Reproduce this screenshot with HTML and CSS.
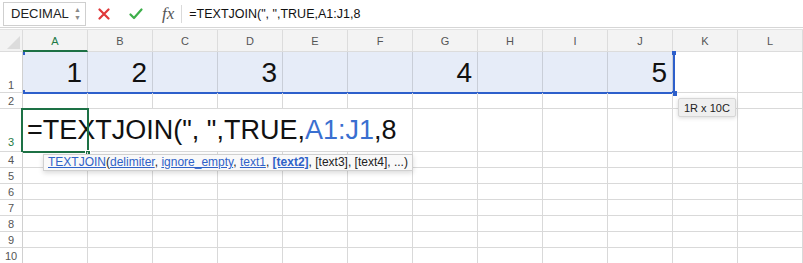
FILE: index.html
```html
<!DOCTYPE html>
<html>
<head>
  <link rel="stylesheet" href="styles.css">
</head>
<body>
  <div class="app">
    <div class="formula-bar">
      <div class="name-box">
        <span>DECIMAL</span>
        <span class="stepper"><span>&#9650;</span><span>&#9660;</span></span>
      </div>
      <div class="bar-buttons">
        <svg class="btn-cancel" width="12" height="12" viewBox="0 0 12 12"><path d="M1.5 1.5 L10.5 10.5 M10.5 1.5 L1.5 10.5" stroke="#e0383a" stroke-width="2.2" stroke-linecap="round"/></svg>
        <svg class="btn-ok" width="14" height="12" viewBox="0 0 14 12"><path d="M1.5 6.5 L5 10 L12.5 1.5" fill="none" stroke="#3daf4a" stroke-width="2.2" stroke-linecap="round" stroke-linejoin="round"/></svg>
        <span class="fx">fx</span>
      </div>
      <div class="formula-text">=TEXTJOIN(", ",TRUE,A1:J1,8</div>
    </div>

    <div class="sheet">
      <div class="row head-row">
        <div class="cell corner"></div>
        <div class="cell col-head active">A</div>
        <div class="cell col-head">B</div>
        <div class="cell col-head">C</div>
        <div class="cell col-head">D</div>
        <div class="cell col-head">E</div>
        <div class="cell col-head">F</div>
        <div class="cell col-head">G</div>
        <div class="cell col-head">H</div>
        <div class="cell col-head">I</div>
        <div class="cell col-head">J</div>
        <div class="cell col-head">K</div>
        <div class="cell col-head">L</div>
      </div>

      <div class="row row-1">
        <div class="cell row-head">1</div>
        <div class="cell num sel">1</div>
        <div class="cell num sel">2</div>
        <div class="cell num sel"></div>
        <div class="cell num sel">3</div>
        <div class="cell num sel"></div>
        <div class="cell num sel"></div>
        <div class="cell num sel">4</div>
        <div class="cell num sel"></div>
        <div class="cell num sel"></div>
        <div class="cell num sel">5</div>
        <div class="cell"></div>
        <div class="cell"></div>
        <div class="selection">
          <i class="knob tl"></i><i class="knob bl"></i><i class="knob tr"></i><i class="knob br"></i>
        </div>
        <div class="size-tip">1R x 10C</div>
      </div>

      <div class="row row-small">
        <div class="cell row-head">2</div>
        <div class="cell"></div><div class="cell"></div><div class="cell"></div><div class="cell"></div>
        <div class="cell"></div><div class="cell"></div><div class="cell"></div><div class="cell"></div>
        <div class="cell"></div><div class="cell"></div><div class="cell"></div><div class="cell"></div>
      </div>

      <div class="row row-3">
        <div class="cell row-head active">3</div>
        <div class="cell editing">=TEXTJOIN(", ",TRUE,<span class="ref">A1:J1</span>,8</div>
        <div class="cell"></div><div class="cell"></div><div class="cell"></div>
        <div class="cell"></div><div class="cell"></div><div class="cell"></div>
        <div class="active-cell"><i class="handle"></i></div>
        <div class="fn-tip">
          <a>TEXTJOIN</a>(<a>delimiter</a>, <a>ignore_empty</a>, <a>text1</a>, <a class="current">[text2]</a>, [text3], [text4], ...)
        </div>
      </div>

      <div class="row row-small">
        <div class="cell row-head">4</div>
        <div class="cell"></div><div class="cell"></div><div class="cell"></div><div class="cell"></div>
        <div class="cell"></div><div class="cell"></div><div class="cell"></div><div class="cell"></div>
        <div class="cell"></div><div class="cell"></div><div class="cell"></div><div class="cell"></div>
      </div>
      <div class="row row-small">
        <div class="cell row-head">5</div>
        <div class="cell"></div><div class="cell"></div><div class="cell"></div><div class="cell"></div>
        <div class="cell"></div><div class="cell"></div><div class="cell"></div><div class="cell"></div>
        <div class="cell"></div><div class="cell"></div><div class="cell"></div><div class="cell"></div>
      </div>
      <div class="row row-small">
        <div class="cell row-head">6</div>
        <div class="cell"></div><div class="cell"></div><div class="cell"></div><div class="cell"></div>
        <div class="cell"></div><div class="cell"></div><div class="cell"></div><div class="cell"></div>
        <div class="cell"></div><div class="cell"></div><div class="cell"></div><div class="cell"></div>
      </div>
      <div class="row row-small">
        <div class="cell row-head">7</div>
        <div class="cell"></div><div class="cell"></div><div class="cell"></div><div class="cell"></div>
        <div class="cell"></div><div class="cell"></div><div class="cell"></div><div class="cell"></div>
        <div class="cell"></div><div class="cell"></div><div class="cell"></div><div class="cell"></div>
      </div>
      <div class="row row-small">
        <div class="cell row-head">8</div>
        <div class="cell"></div><div class="cell"></div><div class="cell"></div><div class="cell"></div>
        <div class="cell"></div><div class="cell"></div><div class="cell"></div><div class="cell"></div>
        <div class="cell"></div><div class="cell"></div><div class="cell"></div><div class="cell"></div>
      </div>
      <div class="row row-small">
        <div class="cell row-head">9</div>
        <div class="cell"></div><div class="cell"></div><div class="cell"></div><div class="cell"></div>
        <div class="cell"></div><div class="cell"></div><div class="cell"></div><div class="cell"></div>
        <div class="cell"></div><div class="cell"></div><div class="cell"></div><div class="cell"></div>
      </div>
      <div class="row row-small">
        <div class="cell row-head">10</div>
        <div class="cell"></div><div class="cell"></div><div class="cell"></div><div class="cell"></div>
        <div class="cell"></div><div class="cell"></div><div class="cell"></div><div class="cell"></div>
        <div class="cell"></div><div class="cell"></div><div class="cell"></div><div class="cell"></div>
      </div>
    </div>
  </div>
</body>
</html>
```

FILE: styles.css
```css
* {
  box-sizing: border-box;
  margin: 0;
  padding: 0;
}

body {
  font-family: "Liberation Sans", Arial, sans-serif;
  background: #fff;
  color: #111;
  overflow: hidden;
}

.app {
  width: 803px;
  height: 263px;
  overflow: hidden;
}

/* formula bar */
.formula-bar {
  height: 28px;
  display: flex;
  align-items: center;
  background: #fff;
  border-bottom: 1px solid #d6d6d6;
}

.name-box {
  width: 83px;
  height: 24px;
  margin-left: 3px;
  border: 1px solid #cfcfcf;
  display: flex;
  align-items: center;
  justify-content: space-between;
  padding: 0 4px 0 7px;
  font-size: 13px;
  color: #222;
}

.stepper {
  display: flex;
  flex-direction: column;
  font-size: 7px;
  line-height: 8px;
  color: #8a8a8a;
}

.bar-buttons {
  display: flex;
  align-items: center;
  padding-left: 12px;
  border-right: 1px solid #dadada;
  height: 18px;
}

.btn-cancel {
  margin-right: 19px;
}

.btn-ok {
  margin-right: 19px;
}

.fx {
  font-family: "Liberation Serif", "DejaVu Serif", serif;
  font-style: italic;
  font-size: 17px;
  color: #555;
  margin-right: 7px;
}

.formula-text {
  padding-left: 7px;
  font-size: 12.5px;
  color: #111;
}

/* grid */
.sheet {
  margin-top: 1px;
  border-top: 1px solid #e2e2e2;
}

.row {
  display: grid;
  grid-template-columns: 23px repeat(12, 65px);
  position: relative;
}

.cell {
  border-right: 1px solid #d9d9d9;
  border-bottom: 1px solid #d9d9d9;
  white-space: nowrap;
}

.head-row {
  height: 22px;
  background: #f3f3f3;
}

.col-head {
  display: flex;
  align-items: center;
  justify-content: center;
  font-size: 11px;
  color: #555;
  border-color: #dcdcdc;
}

.col-head.active {
  color: #1d7a45;
  border-bottom: 2px solid #1d7145;
  padding-top: 1px;
}

.corner {
  position: relative;
  border-color: #dcdcdc;
}

.corner::after {
  content: "";
  position: absolute;
  right: 2px;
  bottom: 2px;
  border-left: 13px solid transparent;
  border-bottom: 13px solid #dcdcdc;
}

.row-head {
  display: flex;
  align-items: flex-end;
  justify-content: center;
  font-size: 11px;
  color: #555;
  background: #fff;
  padding-bottom: 1px;
  border-right-color: #d0d0d0;
}

.row-head.active {
  color: #1d7a45;
  padding-bottom: 3px;
}

.row-1 {
  height: 41px;
}

.row-small {
  height: 16px;
}

.row-3 {
  height: 43px;
}

.num {
  display: flex;
  align-items: flex-end;
  justify-content: flex-end;
  font-size: 28px;
  line-height: 28px;
  padding: 0 5px 5px 0;
}

.sel {
  background: #e6ecf8;
  border-right-color: #c9ced8;
}

.editing {
  grid-column: span 6;
  font-size: 27px;
  line-height: 28px;
  padding: 0 0 7px 4px;
  display: flex;
  align-items: flex-end;
}

.ref {
  color: #3a6fd0;
}

/* row selection outline */
.selection {
  position: absolute;
  left: 23px;
  top: 0;
  width: 652px;
  height: 42px;
  border-right: 2px solid #2d5fcb;
  border-bottom: 2px solid #2d5fcb;
  pointer-events: none;
}

.knob {
  position: absolute;
  background: #2d5fcb;
}

.knob.tl { left: 0; top: 0; width: 2px; height: 3px; }
.knob.bl { left: 0; bottom: -2px; width: 2px; height: 4px; }
.knob.tr { right: -3px; top: -1px; width: 4px; height: 4px; }
.knob.br { right: -4px; bottom: -4px; width: 5px; height: 5px; }

.size-tip {
  position: absolute;
  left: 678px;
  top: 46px;
  height: 19px;
  padding: 0 5px;
  font-size: 11px;
  line-height: 18px;
  color: #222;
  background: #efefef;
  border: 1px solid #d6d6d6;
  border-radius: 2px;
  box-shadow: 0 1px 4px rgba(0, 0, 0, 0.15);
  z-index: 3;
}

/* active cell */
.active-cell {
  position: absolute;
  left: 21px;
  top: -1px;
  width: 68px;
  height: 45px;
  border: 2px solid #1d7145;
  pointer-events: none;
}

.handle {
  position: absolute;
  right: -4px;
  bottom: -4px;
  width: 6px;
  height: 5px;
  background: #1d7145;
  border: 1px solid #fff;
}

/* function hint */
.fn-tip {
  position: absolute;
  left: 43px;
  top: 45px;
  height: 17px;
  width: 370px;
  padding-left: 4px;
  font-size: 12px;
  line-height: 15px;
  color: #222;
  background: #f9f9f9;
  border: 1px solid #d0d0d0;
  box-shadow: 0 2px 5px rgba(0, 0, 0, 0.15);
  white-space: nowrap;
  z-index: 3;
}

.fn-tip a {
  color: #2f62c8;
  text-decoration: underline;
}

.fn-tip a.current {
  font-weight: bold;
}
```
